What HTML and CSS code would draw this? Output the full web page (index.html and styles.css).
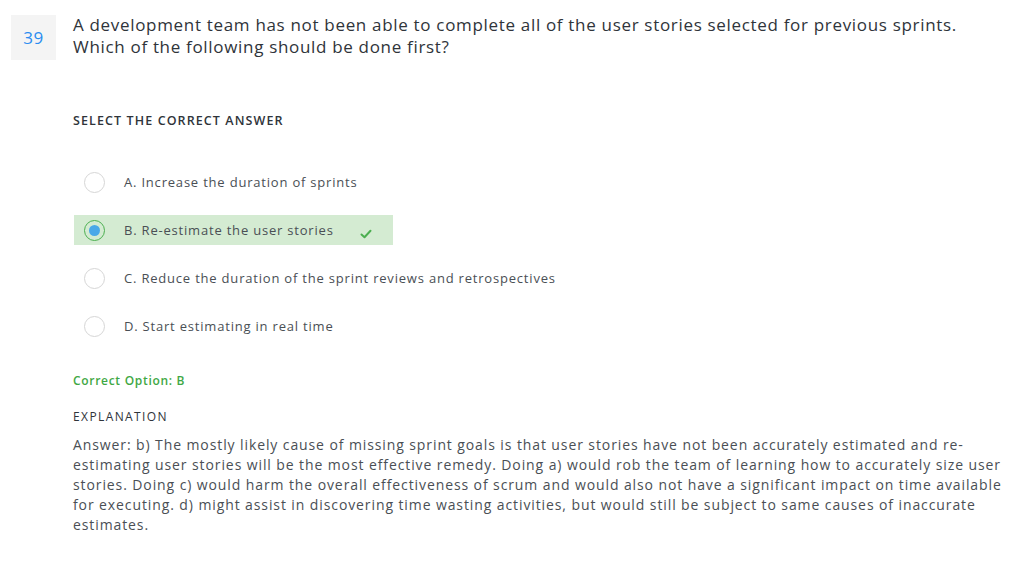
FILE: index.html
```html
<!DOCTYPE html>
<html>
<head>
<meta charset="utf-8">
<link rel="stylesheet" href="styles.css">
</head>
<body>
<div class="question">
  <div class="qnum">39</div>
  <div class="qbody">
    <div class="qtext">A development team has not been able to complete all of the user stories selected for previous sprints. Which of the following should be done first?</div>
    <div class="label select-label">SELECT THE CORRECT ANSWER</div>
    <div class="options">
      <div class="option">
        <span class="radio"></span>
        <span class="otext">A. Increase the duration of sprints</span>
      </div>
      <div class="option correct">
        <span class="radio checked"><span class="dot"></span></span>
        <span class="otext">B. Re-estimate the user stories</span>
        <svg class="check" width="12" height="10" viewBox="0 0 12 10"><path d="M1.5 5.5 L4.5 8.2 L10.5 1.8" fill="none" stroke="#4caf50" stroke-width="2" stroke-linecap="round" stroke-linejoin="round"/></svg>
      </div>
      <div class="option">
        <span class="radio"></span>
        <span class="otext">C. Reduce the duration of the sprint reviews and retrospectives</span>
      </div>
      <div class="option">
        <span class="radio"></span>
        <span class="otext">D. Start estimating in real time</span>
      </div>
    </div>
    <div class="correct-option">Correct Option: B</div>
    <div class="label expl-label">EXPLANATION</div>
    <div class="expl">Answer: b) The mostly likely cause of missing sprint goals is that user stories have not been accurately estimated and re-estimating user stories will be the most effective remedy. Doing a) would rob the team of learning how to accurately size user stories. Doing c) would harm the overall effectiveness of scrum and would also not have a significant impact on time available for executing. d) might assist in discovering time wasting activities, but would still be subject to same causes of inaccurate estimates.</div>
  </div>
</div>
</body>
</html>
```
FILE: styles.css
```css
html, body {
  margin: 0;
  padding: 0;
  background: #fff;
}
body {
  font-family: "Open Sans", "Liberation Sans", sans-serif;
  color: #3a3f45;
}
.question {
  display: flex;
  padding: 15px 0 0 11px;
}
.qnum {
  width: 45px;
  height: 45px;
  background: #f4f4f4;
  color: #2a8cf0;
  font-size: 17px;
  letter-spacing: 0.5px;
  display: flex;
  align-items: center;
  justify-content: center;
  flex-shrink: 0;
}
.qbody {
  margin-left: 17px;
  width: 930px;
}
.qtext {
  font-size: 17px;
  line-height: 22px;
  color: #2f343a;
  margin-top: -1px;
  letter-spacing: 0.68px;
}
.label {
  font-size: 12.5px;
  font-weight: 600;
  color: #2f343a;
  letter-spacing: 1.1px;
}
.select-label {
  margin-top: 54px;
}
.options {
  margin-top: 38px;
  display: flex;
  flex-direction: column;
  gap: 18px;
}
.option {
  display: flex;
  align-items: center;
  height: 30px;
  width: 319px;
  margin-left: 1px;
  padding-left: 10px;
  box-sizing: border-box;
}
.option.correct {
  background: #d4ebd2;
}
.radio {
  width: 21px;
  height: 21px;
  border: 1px solid #d6d6d6;
  border-radius: 50%;
  box-sizing: border-box;
  display: flex;
  align-items: center;
  justify-content: center;
  flex-shrink: 0;
}
.radio.checked {
  border-color: #4caf50;
}
.dot {
  width: 11px;
  height: 11px;
  border-radius: 50%;
  background: #4aa8e8;
}
.otext {
  margin-left: 19px;
  font-size: 13px;
  color: #4a4f55;
  white-space: nowrap;
  letter-spacing: 0.8px;
}
.check {
  margin-left: 26px;
  margin-top: 8px;
}
.correct-option {
  margin-top: 31px;
  font-size: 12px;
  font-weight: 600;
  color: #3fa845;
  letter-spacing: 0.7px;
}
.expl-label {
  margin-top: 19px;
  font-weight: 500;
  font-size: 12px;
  letter-spacing: 1.4px;
}
.expl {
  margin-top: 10px;
  font-size: 14px;
  line-height: 20px;
  color: #4a4f55;
  letter-spacing: 0.9px;
}
```
